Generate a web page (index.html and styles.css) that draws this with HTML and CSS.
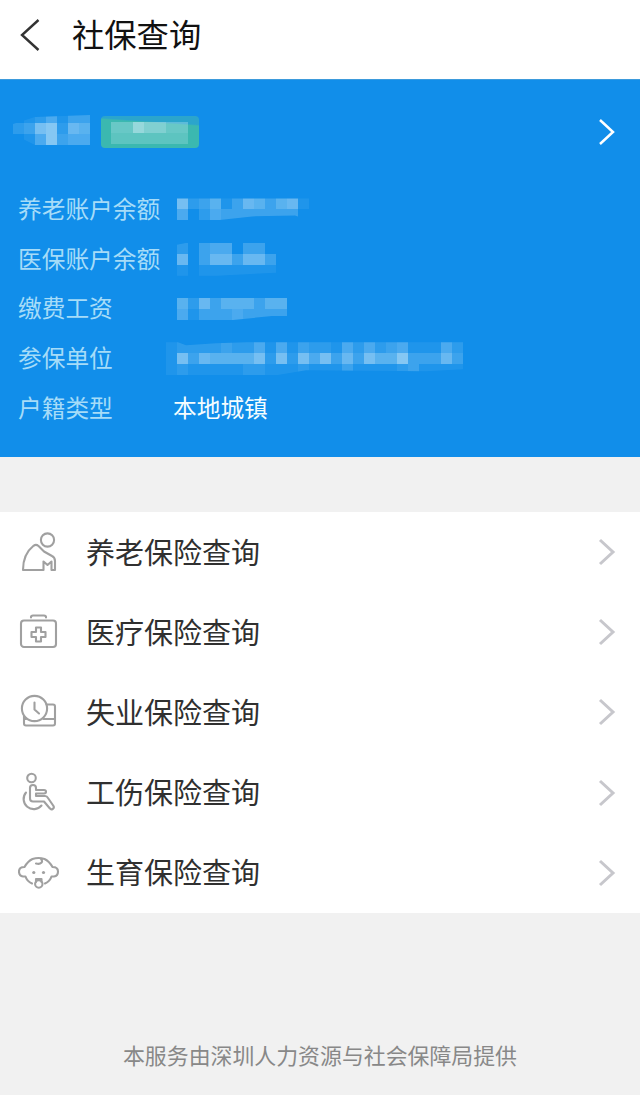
FILE: index.html
```html
<!DOCTYPE html>
<html lang="zh-CN">
<head>
<meta charset="utf-8">
<title>社保查询</title>
<link rel="stylesheet" href="styles.css">
</head>
<body>
<header class="topbar">
  <svg class="back" width="20" height="34" viewBox="0 0 20 34"><path d="M18.500 2 2 17l16.500 15"/></svg>
  <h1>社保查询</h1>
</header>

<section class="account">
  <div class="profile">
    <svg class="mosaic name" width="77" height="33" data-rows="0124133 2378265 0148344" style="clip-path:polygon(0 12px,22px 5px,77px 3px,77px 100%,22px 100%,0 22px)"></svg>
    <div class="badge"><svg class="mosaic" width="77" height="22" data-rows="4486644 3333333"></svg></div>
    <svg class="arrow light" width="18" height="28" viewBox="0 0 18 28"><path d="M2 2l13 12L2 26"/></svg>
  </div>
  <dl class="details">
    <div class="row"><dt>养老账户余额</dt><dd><svg class="mosaic" width="132" height="22" data-rows="723513653561 402433333330" style="clip-path:polygon(0 0,100% 0,100% 100%,118px 17px,75px 18px,38px 100%,0 100%)"></svg></dd></div>
    <div class="row"><dt>医保账户余额</dt><dd><svg class="mosaic" width="99" height="33" data-rows="203440330 603663663 101111111" style="clip-path:polygon(0 2px,10px 0,100% 0,100% 30px,40px 100%,0 100%)"></svg></dd></div>
    <div class="row"><dt>缴费工资</dt><dd><svg class="mosaic" width="110" height="22" data-rows="5263555355 4133343333" style="clip-path:polygon(0 0,100% 0,100% 18px,95px 18px,56px 100%,0 100%)"></svg></dd></div>
    <div class="row"><dt>参保单位</dt><dd><svg class="mosaic company" width="297" height="33" data-rows="122223224141322142423411142 173655557272747363755833363 121111122111211131111231111" style="clip-path:polygon(0 0,12px 0,20px 3px,50px 1px,80px 0,100% 0,100% 27px,260px 29px,140px 28px,110px 100%,0 100%)"></svg></dd></div>
    <div class="row"><dt>户籍类型</dt><dd class="text">本地城镇</dd></div>
  </dl>
</section>

<nav class="services">
  <a class="item">
    <svg class="icon" width="42" height="42" viewBox="0 0 42 42"><circle cx="29.500" cy="9" r="6.600"/><path d="M5 39C5 29 9 20 15.500 14.800q2.500-1.800 5 .2L26 20.500l8 4.500q3 1.500 3 5v9h-3.500v-8.500L29.500 34l-4-3.500V39z"/></svg>
    <span>养老保险查询</span>
    <svg class="arrow" width="18" height="28" viewBox="0 0 18 28"><path d="M2 2l13 12L2 26"/></svg>
  </a>
  <a class="item">
    <svg class="icon" width="42" height="42" viewBox="0 0 42 42"><rect x="3" y="9.500" width="35" height="26.500" rx="3"/><path d="M13 6.500V6q0-1.500 2-1.500h11q2 0 2 1.500v.5M18 16.500h5V21h4.500v5H23v4.500h-5V26h-4.500v-5H18z"/></svg>
    <span>医疗保险查询</span>
    <svg class="arrow" width="18" height="28" viewBox="0 0 18 28"><path d="M2 2l13 12L2 26"/></svg>
  </a>
  <a class="item">
    <svg class="icon" width="42" height="42" viewBox="0 0 42 42"><circle cx="16.500" cy="17.500" r="12.600"/><path d="M16.500 11.500v7l4.500 4M28.500 13.500H35q2 0 2 2v17q0 2-2 2H8q-2 0-2-2v-7.500M25.500 28H37M6 28h2"/></svg>
    <span>失业保险查询</span>
    <svg class="arrow" width="18" height="28" viewBox="0 0 18 28"><path d="M2 2l13 12L2 26"/></svg>
  </a>
  <a class="item">
    <svg class="icon" width="42" height="42" viewBox="0 0 42 42"><circle cx="13.500" cy="6" r="4.300"/><path d="M8 20.500A10 10 0 1 0 23.500 33.500M12 16q0-3 3-3t3 3v2h8q2 0 2 1.700t-2 1.800h-8v2.500h9q2 0 3 2l5.500 8q1 2-.8 3t-3-.8L26 29.500H15q-3 0-3-3z"/></svg>
    <span>工伤保险查询</span>
    <svg class="arrow" width="18" height="28" viewBox="0 0 18 28"><path d="M2 2l13 12L2 26"/></svg>
  </a>
  <a class="item">
    <svg class="icon" width="42" height="42" viewBox="0 0 42 42"><path d="M14 31.500Q9 29.500 7.500 24.500H5Q1 24 1 19.500 1 15 6.500 15 10 9 14.500 7q6-2 12 0Q31 9 34.500 15q5.500 0 5.500 4.500 0 4.500-4 5h-2.500q-1.500 5-6.500 7M23 7c2.500 3 0 5.800-5 4.500M18 30v-3h5.500v3"/><circle cx="20.800" cy="32" r="3.700"/><circle class="dot" cx="15.800" cy="20.500" r="1.600"/><circle class="dot" cx="25.500" cy="20.500" r="1.600"/></svg>
    <span>生育保险查询</span>
    <svg class="arrow" width="18" height="28" viewBox="0 0 18 28"><path d="M2 2l13 12L2 26"/></svg>
  </a>
</nav>

<footer class="footer">本服务由深圳人力资源与社会保障局提供</footer>
<script src="mosaic.js"></script>
</body>
</html>
```
FILE: styles.css
```css
* { box-sizing: border-box; }
body {
  margin: 0;
  height: 1095px;
  display: flex;
  flex-direction: column;
  background: #f1f1f1;
  font-family: "Noto Sans CJK SC", sans-serif;
  overflow: hidden;
}
svg { display: block; flex: none; fill: none; }
.topbar {
  height: 79px;
  padding: 0 0 9px 20px;
  display: flex;
  align-items: center;
  background: #fff;
}
.back { stroke: #333; stroke-width: 2.4; }
.topbar h1 {
  margin: -4px 0 0 32px;
  font-size: 32.3px;
  line-height: 48px;
  font-weight: 400;
  color: #111;
}
.account { height: 378px; background: #118eea; border-top: 1px solid #3d9bdc; }
.profile {
  height: 104px;
  padding: 0 24px 0 13px;
  display: flex;
  align-items: center;
}
.mosaic rect { fill: #d8f0fa; }
.name { margin-top: -7px; }
.badge {
  width: 98px;
  height: 32px;
  margin-left: 11px;
  padding: 6px 10px 0;
  border-radius: 4px;
  background: linear-gradient(184deg, #2ba5cc 22%, #3bb8b0 26%);
}
.arrow { margin-left: auto; stroke: #c7c7cc; stroke-width: 3; }
.arrow.light { stroke: #fff; stroke-width: 2.5; }
.details { margin: 0; }
.row {
  height: 49.8px;
  padding-left: 18px;
  display: flex;
  align-items: center;
}
.row dt { width: 155px; margin-top: -2px; font-size: 23.7px; line-height: 36px; color: #a6dcf8; white-space: nowrap; }
.row dd { margin: 1px 0 0; padding-left: 4px; }
.row dd.text { margin-top: -2px; padding: 0; font-size: 23.7px; line-height: 36px; color: #f4fdff; }
.company { margin-left: -11px; }
.services { height: 401px; margin-top: 55px; background: #fff; }
.item {
  height: 80.2px;
  padding: 0 24px 0 18px;
  display: flex;
  align-items: center;
}
.icon { stroke: #a0a0a0; stroke-width: 2.1; stroke-linejoin: round; stroke-linecap: round; }
.icon .dot { fill: #a0a0a0; stroke: none; }
.item span { margin: -3px 0 0 26px; font-size: 29px; line-height: 44px; color: #303030; }
.footer { margin-top: 126px; text-align: center; font-size: 21.9px; line-height: 32px; color: #888; }
```
FILE: mosaic.js
```js
// Each digit in data-rows is the strength of one 11px privacy tile.
document.querySelectorAll('.mosaic').forEach(function (svg) {
  svg.dataset.rows.split(' ').forEach(function (row, y) {
    row.split('').forEach(function (level, x) {
      var tile = document.createElementNS('http://www.w3.org/2000/svg', 'rect');
      tile.setAttribute('x', x * 11);
      tile.setAttribute('y', y * 11);
      tile.setAttribute('width', 11);
      tile.setAttribute('height', 11);
      tile.setAttribute('fill-opacity', level * 0.073);
      svg.appendChild(tile);
    });
  });
});
```
